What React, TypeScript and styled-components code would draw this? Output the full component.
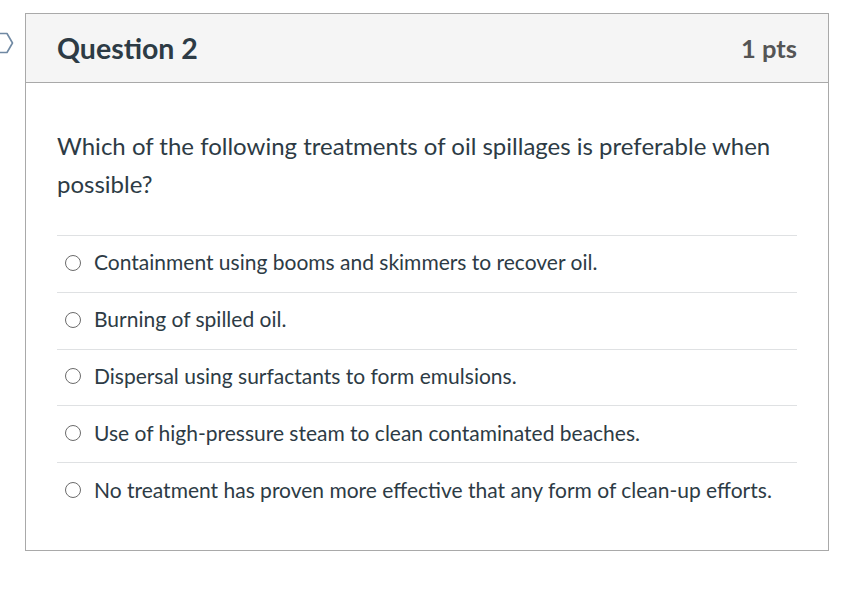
import React from "react";
import styled, { createGlobalStyle } from "styled-components";

const Global = createGlobalStyle`
  html, body { margin: 0; padding: 0; background: #ffffff; }
  body { font-family: Lato, "Open Sans", "Liberation Sans", sans-serif; color: #2d3b45; }
`;

const Page = styled.div`
  position: relative;
  padding: 13px 0 0 25px;
  width: 848px;
  height: 590px;
  box-sizing: border-box;
`;

const Marker = styled.svg`
  position: absolute;
  left: 0;
  top: 32px;
`;

const Card = styled.section`
  width: 804px;
  height: 538px;
  box-sizing: border-box;
  border: 1px solid #a9a9a9;
  background: #ffffff;
`;

const Header = styled.header`
  display: flex;
  align-items: center;
  justify-content: space-between;
  height: 69px;
  box-sizing: border-box;
  padding: 0 31px 1px;
  background: #f5f5f5;
  border-bottom: 1px solid #a9a9a9;
`;

const Title = styled.h2`
  margin: 0;
  font-size: 28.5px;
  font-weight: 700;
  color: #2d3b45;
`;

const Points = styled.span`
  font-size: 25.5px;
  font-weight: 700;
  color: #555555;
`;

const Body = styled.div`
  padding: 44px 31px 0;
`;

const Prompt = styled.p`
  margin: 0 0 32px;
  font-size: 24px;
  line-height: 38px;
  color: #2d3b45;
`;

const Answers = styled.div`
  display: flex;
  flex-direction: column;
`;

const Answer = styled.label`
  display: flex;
  align-items: center;
  gap: 13px;
  height: 56.8px;
  box-sizing: border-box;
  padding: 0 0 4px 8px;
  border-top: 1px solid #dfe1e3;
  font-size: 21px;
  color: #2d3b45;
  cursor: pointer;
`;

const Radio = styled.span`
  width: 16px;
  height: 16px;
  box-sizing: border-box;
  border: 1.4px solid #6b6b6b;
  border-radius: 50%;
  flex-shrink: 0;
  margin-top: 2px;
`;

const options = [
  "Containment using booms and skimmers to recover oil.",
  "Burning of spilled oil.",
  "Dispersal using surfactants to form emulsions.",
  "Use of high-pressure steam to clean contaminated beaches.",
  "No treatment has proven more effective that any form of clean-up efforts.",
];

export default function App() {
  return (
    <>
      <Global />
      <Page>
        <Marker width="16" height="24" viewBox="0 0 16 24">
          <path
            d="M-2 1.5 H7 L12.5 11 L7 20.5 H-2"
            fill="#ffffff"
            stroke="#7089a3"
            strokeWidth="1.6"
            strokeLinejoin="round"
          />
        </Marker>
        <Card>
          <Header>
            <Title>Question 2</Title>
            <Points>1 pts</Points>
          </Header>
          <Body>
            <Prompt>
              Which of the following treatments of oil spillages is preferable when possible?
            </Prompt>
            <Answers>
              {options.map((o) => (
                <Answer key={o}>
                  <Radio />
                  {o}
                </Answer>
              ))}
            </Answers>
          </Body>
        </Card>
      </Page>
    </>
  );
}
